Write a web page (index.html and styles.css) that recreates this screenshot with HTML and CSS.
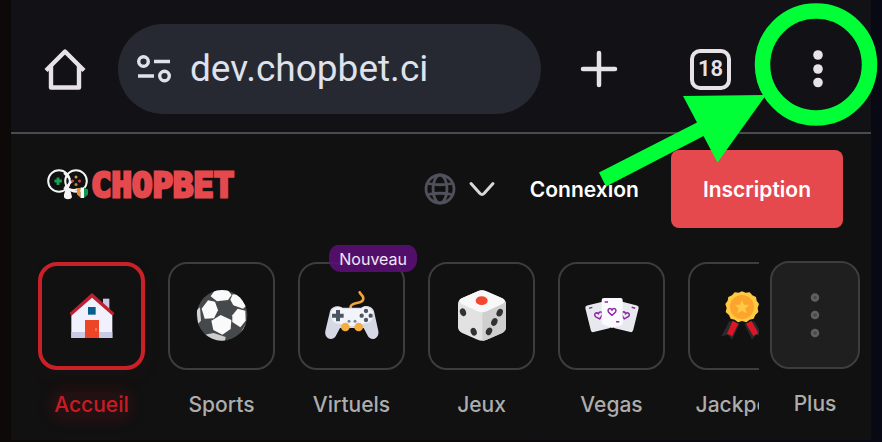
FILE: index.html
```html
<!DOCTYPE html>
<html lang="fr">
<head>
<meta charset="utf-8">
<meta name="viewport" content="width=device-width, initial-scale=1">
<title>Chopbet</title>
<link rel="stylesheet" href="styles.css">
</head>
<body>
<div class="screen">
  <div class="toolbar">
    <button class="tool" type="button" aria-label="Accueil du navigateur">
      <svg width="44" height="44" viewBox="0 0 44 44" fill="none" stroke="#e6e2e8" stroke-width="4.4" stroke-linejoin="round"><path d="M3 23.500 22 4.500 41 23.500" /><path d="M8 19V40.500H36V19"/></svg>
    </button>
    <div class="address">
      <svg class="tune" width="36" height="32" viewBox="0 0 36 32" fill="none" stroke="#dfe1ec" stroke-width="3.400"><circle cx="7.500" cy="8.500" r="4.800"/><path d="M18 8.500H34M2 23H18"/><circle cx="28.500" cy="23" r="4.800"/></svg>
      <input class="url" type="text" value="dev.chopbet.ci" aria-label="Adresse" spellcheck="false">
    </div>
    <button class="tool tool-add" type="button" aria-label="Nouvel onglet">
      <svg width="38" height="38" viewBox="0 0 38 38" stroke="#e6e2e8" stroke-width="4.500" stroke-linecap="round"><path d="M19 3V35M3 19H35"/></svg>
    </button>
    <button class="tool" type="button" aria-label="18 onglets"><span class="tabs">18</span></button>
    <button class="tool" type="button" aria-label="Menu">
      <svg width="12" height="40" viewBox="0 0 12 40" fill="#e6e2e8"><circle cx="6" cy="6" r="4.800"/><circle cx="6" cy="20" r="4.800"/><circle cx="6" cy="33.500" r="4.800"/></svg>
    </button>
    <svg class="pointer" width="290" height="200" viewBox="592 0 290 200" aria-hidden="true"><circle cx="816" cy="64.500" r="53.500" fill="none" stroke="#00ff37" stroke-width="15.500"/><path d="M683 96 766 95 717.500 162.500 703.500 136 606 186.500 599 172.500 697 122.500Z" fill="#00ff37"/></svg>
  </div>

  <header class="header">
    <a class="logo" href="#">
      <svg width="42" height="32" viewBox="0 0 42 32" fill="none" aria-hidden="true">
        <circle cx="12" cy="12" r="10.800" stroke="#f4f4f4" stroke-width="2"/>
        <circle cx="29" cy="12" r="10.800" stroke="#f4f4f4" stroke-width="2"/>
        <path d="M17 20 25 12M17 4 23 10" stroke="#f4f4f4" stroke-width="2"/>
        <path d="M11 8.500V16M7.500 12H14.800" stroke="#18a354" stroke-width="2.800"/>
        <circle cx="29" cy="8" r="1.500" fill="#c9a24a"/><circle cx="25.500" cy="12" r="1.500" fill="#c84c44"/><circle cx="32.500" cy="12" r="1.500" fill="#c84c44"/><circle cx="29" cy="15.500" r="1.500" fill="#b88a3c"/>
        <path d="M18 17C22 21 26 22 31 20" stroke="#f4f4f4" stroke-width="2"/>
        <path d="M19 19C18 23 16.500 25 17 28C18 31 24 31 25 28L23 20Z" fill="#f4f4f4"/>
        <path d="M30 19H33.500V28.500L30 25.500Z" fill="#f28c28"/><path d="M33.500 18.500H37V29H33.500Z" fill="#fff"/><path d="M37 18.500 41 20.500V25.500L37 29Z" fill="#159947"/>
      </svg>
      <span class="wordmark">CHOPBET</span>
    </a>
    <button class="language" type="button" aria-label="Langue">
      <svg width="32" height="32" viewBox="0 0 32 32" fill="none" stroke="#51515d" stroke-width="2.800"><circle cx="16" cy="16" r="14"/><ellipse cx="16" cy="16" rx="7" ry="14"/><path d="M4 10.500Q16 13 28 10.500M4 21.500Q16 19 28 21.500" /></svg>
      <svg width="28" height="16" viewBox="0 0 28 16" fill="none" stroke="#d8d8d8" stroke-width="3" stroke-linecap="round" stroke-linejoin="round"><path d="M3 2.500 12 12.500Q14 14.500 16 12.500L25 2.500"/></svg>
    </button>
    <a class="login" href="#">Connexion</a>
    <a class="signup" href="#">Inscription</a>
  </header>

  <nav class="categories">
    <div class="track">
      <a class="item active" href="#">
        <span class="tile"><svg class="icon" viewBox="0 0 180 180"><path d="M123 38H142V82H123Z" fill="#c7c8e6"/><path d="M28 84 90 28 151 84V156H28Z" fill="#f1f1fd"/><path d="M28 138H151V156H28Z" fill="#c9cae5"/><path d="M23 81 90 21 157 81 152 89 90 35 28 89Z" fill="#bd2030"/><path d="M78 63H101V86H78Z" fill="#075f8e"/><path d="M69 102H111V156H69Z" fill="#ed4526"/><path d="M102 126V135" stroke="#f6a88f" stroke-width="3"/></svg></span>
        <span class="label">Accueil</span>
      </a>
      <a class="item" href="#">
        <span class="tile"><svg class="icon" viewBox="0 0 180 180"><defs><clipPath id="ball"><circle cx="90" cy="88" r="76"/></clipPath></defs><g clip-path="url(#ball)"><path d="M0 0H180V180H0Z" fill="#45494b"/><g fill="#fafafa"><path d="M56 31 69 12H107L119 27 108 42 75 46Z"/><path d="M29 68 48 43 69 47 78 73 66 97 38 98Z"/><path d="M58 104 86 87 118 102 116 129 91 146 64 132Z"/><path d="M115 41 122 25 142 27 162 60 153 68 124 58Z"/><path d="M121 88 137 68 160 74 161 104 145 124 121 108Z"/><path d="M14 72 24 64 27 104 18 113Z" fill="#d5d6d6"/><path d="M38 146 65 141 101 153 98 170H58Z" fill="#cecece"/><path d="M146 139 164 111 170 125 150 145Z" fill="#dedede"/></g></g></svg></span>
        <span class="label">Sports</span>
      </a>
      <a class="item" href="#">
        <span class="badge">Nouveau</span>
        <span class="tile"><svg class="icon" viewBox="0 0 180 180"><path d="M86 70V62C88 46 125 56 124 37C123 27 116 27 113 19" fill="none" stroke="#f3a43a" stroke-width="8" stroke-linecap="round"/><path d="M24 76C28 59 52 57 61 65H118C128 56 151 60 156 76L169 135C173 157 149 168 138 151L125 126H54L41 151C30 167 6 157 10 135Z" fill="#d5d9e5"/><path d="M28 77C34 61 56 62 63 68H117C131 59 148 65 153 80C157 98 144 113 128 112L112 120H67L51 112C35 114 22 94 28 77Z" fill="#f2f4fa"/><path d="M42 72H54V83H65V95H54V106H42V95H30V83H42Z" fill="#4c5663"/><g fill="#4c5663"><circle cx="132" cy="75" r="6.500"/><circle cx="119" cy="89" r="6.500"/><circle cx="146" cy="89" r="6.500"/><circle cx="132" cy="102" r="6.500"/></g><circle cx="81" cy="106" r="4.500" fill="#7d8792"/><circle cx="99" cy="106" r="4.500" fill="#7d8792"/><circle cx="70" cy="123" r="13" fill="#f5ad3e"/><circle cx="110" cy="123" r="13" fill="#f5ad3e"/></svg></span>
        <span class="label">Virtuels</span>
      </a>
      <a class="item" href="#">
        <span class="tile"><svg class="icon" viewBox="0 0 180 180"><path d="M79 15Q89 10 101 15L151 37Q162 43 162 54V123Q162 134 152 140L104 161Q90 167 77 161L29 140Q18 134 18 123V54Q18 43 29 37Z" fill="#e2e2e2"/><path d="M91 80 162 47V123Q162 134 152 140L104 161Q98 164 91 164Z" fill="#cfcfcf"/><path d="M79 15Q89 10 101 15L151 37Q165 45 151 54L104 76Q90 82 77 76L29 54Q15 45 29 37Z" fill="#f8f8f8"/><ellipse cx="89" cy="44" rx="18" ry="13" fill="#f4472f"/><g fill="#303233"><ellipse cx="33" cy="79" rx="9" ry="12" transform="rotate(-20 33 79)"/><ellipse cx="65" cy="137" rx="9" ry="12" transform="rotate(-20 65 137)"/><ellipse cx="143" cy="80" rx="9" ry="12" transform="rotate(25 143 80)"/><ellipse cx="127" cy="108" rx="9" ry="12" transform="rotate(25 127 108)"/><ellipse cx="111" cy="136" rx="9" ry="12" transform="rotate(25 111 136)"/></g></svg></span>
        <span class="label">Jeux</span>
      </a>
      <a class="item" href="#">
        <span class="tile"><svg class="icon" viewBox="0 0 180 180"><g fill="none" stroke="#8d2aa5" stroke-width="4.500"><g transform="rotate(-14 47 91)"><rect x="17" y="52" width="62" height="82" rx="7" fill="#e8e8ef" stroke="none"/><path d="M51 100 41 91C35 82 46 76 51 84C56 76 67 82 61 91ZM28 61H38"/></g><g transform="rotate(14 134 91)"><rect x="101" y="52" width="62" height="82" rx="7" fill="#e8e8ef" stroke="none"/><path d="M129 100 119 91C113 82 124 76 129 84C134 76 145 82 139 91ZM142 61H153"/></g><path d="M66 36H116Q122 36 122 43V111Q122 116 116 118L90 126 66 116Q59 115 59 109V43Q59 36 66 36Z" fill="#fbfaff" stroke="none"/><path d="M90 88 80 79C74 69 85 64 90 72C95 64 106 69 100 79ZM68 48H78M102 107H112"/></g></svg></span>
        <span class="label">Vegas</span>
      </a>
      <a class="item" href="#">
        <span class="tile"><svg class="icon" viewBox="0 0 180 180"><path d="M52 105 28 151 48 146 60 161 83 113ZM127 105 152 151 132 146 120 161 97 113Z" fill="#2b2930"/><path d="M62 104 45 143 61 150 79 113ZM118 104 139 141 124 150 102 113Z" fill="#d81826"/><path d="M90 16 101 20 113 19 121 28 132 33 134 44 141 54 137 66 139 78 130 87 125 98 113 101 103 109 90 105 78 109 68 101 56 98 51 87 41 78 44 66 40 54 47 44 49 33 60 28 68 19 80 20Z" fill="#ffca42"/><circle cx="90" cy="63" r="36" fill="#fba52e"/><path d="M90 42 96 56 112 57 100 67 104 82 90 74 76 82 80 67 68 57 84 56Z" fill="#ffca42"/></svg></span>
        <span class="label">Jackpots</span>
      </a>
    </div>
    <a class="item more" href="#">
      <span class="tile"><svg width="12" height="48" viewBox="0 0 12 48" fill="#484848" stroke="#606060" stroke-width="2.500"><circle cx="6" cy="6.500" r="3"/><circle cx="6" cy="24" r="3"/><circle cx="6" cy="42" r="3"/></svg></span>
      <span class="label">Plus</span>
    </a>
  </nav>
</div>
</body>
</html>
```

FILE: styles.css
```css
* {
  box-sizing: border-box;
}

body {
  margin: 0;
  min-height: 100vh;
  padding: 0 11px 2px;
  background: linear-gradient(90deg, #0d0909 0, #0d0909 50%, #090915 100%);
  font-family: Inter, "Liberation Sans", sans-serif;
  color: #fff;
  overflow-x: hidden;
}

a {
  color: inherit;
  text-decoration: none;
}

button {
  padding: 0;
  border: 0;
  background: none;
  color: inherit;
}

svg {
  display: block;
  flex: none;
}

.screen {
  background: #111;
}

.toolbar {
  position: relative;
  display: flex;
  align-items: center;
  padding: 24px 0 18px;
  border-bottom: 2px solid #4a4b4d;
  background: #111116;
}

.tool {
  display: flex;
  flex: 0 0 107px;
  align-items: center;
  justify-content: center;
}

.tool-add {
  flex-basis: 116px;
}

.address {
  display: flex;
  flex: 1;
  align-items: center;
  gap: 18px;
  min-width: 0;
  height: 90px;
  padding: 0 24px 0 18px;
  border-radius: 45px;
  background: #262932;
}

.url {
  flex: 1;
  min-width: 0;
  padding: 0;
  border: 0;
  outline: 0;
  background: none;
  color: #dfe1ec;
  font: 400 37px/48px Roboto, sans-serif;
}

.tabs {
  display: grid;
  place-items: center;
  width: 41px;
  height: 41px;
  border: 4px solid #e6e2e8;
  border-radius: 10px;
  color: #e6e2e8;
  font: 600 22px/24px Roboto, sans-serif;
}

.pointer {
  position: absolute;
  top: 0;
  right: -11px;
  z-index: 2;
  pointer-events: none;
}

.header {
  display: flex;
  align-items: center;
  padding: 16px 28px 17px 36px;
}

.logo {
  display: flex;
  align-items: center;
  gap: 2px;
  margin-right: auto;
  padding-bottom: 8px;
}

.wordmark {
  color: #e5484d;
  font: 700 34px/40px "DejaVu Sans Mono", monospace;
  -webkit-text-stroke: 3px #e5484d;
}

.language {
  display: flex;
  align-items: center;
  gap: 12px;
  margin-right: 34px;
}

.login,
.signup {
  padding: 27px 32px 25px;
  font-size: 21px;
  line-height: 26px;
  font-weight: 600;
}

.login {
  padding-left: 0;
}

.signup {
  border-radius: 8px;
  background: #e5484d;
}

.categories {
  display: flex;
  gap: 11px;
  padding: 0 11px 0 27px;
}

.track {
  display: flex;
  flex: 1;
  gap: 23px;
  min-width: 0;
  padding: 17px 0 22px;
  overflow: hidden;
}

.item {
  position: relative;
  display: flex;
  flex: none;
  flex-direction: column;
  align-items: center;
  gap: 22px;
}

.tile {
  position: relative;
  display: grid;
  place-items: center;
  width: 107px;
  height: 108px;
  border: 2px solid #3d3d3d;
  border-radius: 19px;
}

.icon {
  width: 60px;
  height: 60px;
}

.label {
  color: #adadad;
  font-size: 21px;
  line-height: 26px;
  font-weight: 500;
}

.active .tile {
  border: 4px solid #c92127;
  box-shadow: 0 8px 24px #c921270a;
}

.active .label {
  border-radius: 12px;
  background: #211112;
  box-shadow: 0 0 8px 6px #211112;
  color: #cb1b22;
}

.badge {
  position: absolute;
  top: -18px;
  right: -12px;
  z-index: 1;
  padding: 4px 10px 2px;
  border-radius: 12px;
  background: #5a0f74e6;
  color: #f3e6f7;
  font-size: 16px;
  line-height: 22px;
}

.more {
  padding-top: 16px;
}

.more .tile {
  width: 90px;
  background: #1f1f1f;
}
```
